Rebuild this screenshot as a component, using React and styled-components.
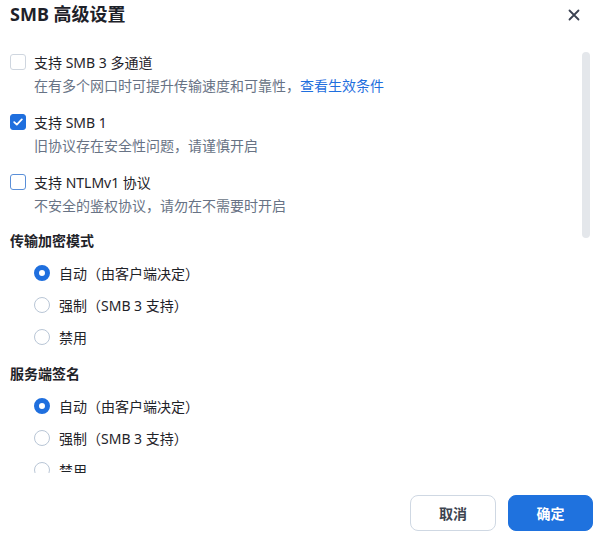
import { createGlobalStyle, styled } from "styled-components";

const GlobalStyle = createGlobalStyle`
  html, body {
    margin: 0;
    padding: 0;
    background: #fff;
  }
  body {
    font-family: "Noto Sans", "Noto Sans CJK SC", sans-serif;
    color: #1f2329;
  }
  * {
    box-sizing: border-box;
  }
`;

const Dialog = styled.div`
  position: relative;
  width: 599px;
  height: 541px;
  display: flex;
  flex-direction: column;
  background: #fff;
  overflow: hidden;
`;

const Header = styled.div`
  height: 44px;
  padding: 1px 10px 0;
  display: flex;
  align-items: flex-start;
  justify-content: space-between;
  h2 {
    margin: 0;
    font-size: 18px;
    line-height: 26px;
    font-weight: 700;
    color: #1d2129;
  }
`;

const CloseButton = styled.button`
  border: 0;
  background: none;
  padding: 0;
  margin: 3px 4px 0 0;
  width: 22px;
  height: 22px;
  display: flex;
  align-items: center;
  justify-content: center;
  cursor: pointer;
`;

const Body = styled.div`
  height: 429px;
  overflow: hidden;
  padding: 6px 20px 0 10px;
`;

const ScrollThumb = styled.div`
  position: absolute;
  right: 9px;
  top: 52px;
  width: 8px;
  height: 186px;
  border-radius: 4px;
  background: #e4e7eb;
`;

const Option = styled.div`
  margin-bottom: 12px;
`;

const Row = styled.label`
  display: flex;
  align-items: center;
  gap: ${(p) => p.$gap || 8}px;
  height: 24px;
  font-size: 14px;
  color: #1f2329;
`;

const Box = styled.span`
  width: 16px;
  height: 16px;
  border-radius: 3px;
  display: flex;
  align-items: center;
  justify-content: center;
  border: 1px solid ${(p) => (p.$checked ? "#1f6fde" : p.$focus ? "#5a8fd8" : "#cfd6df")};
  background: ${(p) => (p.$checked ? "#1f6fde" : "#fff")};
`;

const Desc = styled.div`
  padding-left: 24px;
  font-size: 14px;
  line-height: 24px;
  color: #687385;
  a {
    color: #1f6fde;
    text-decoration: none;
  }
`;

const SectionTitle = styled.div`
  font-size: 14px;
  font-weight: 700;
  line-height: 24px;
  color: #1f2329;
  margin: ${(p) => (p.$first ? "-1px" : "13px")} 0 8px;
`;

const RadioList = styled.div`
  display: flex;
  flex-direction: column;
  gap: 8px;
  padding-left: 24px;
`;

const Dot = styled.span`
  width: 16px;
  height: 16px;
  border-radius: 50%;
  flex-shrink: 0;
  border: ${(p) => (p.$checked ? "5px solid #1f6fde" : "1px solid #b9c6d6")};
  background: #fff;
`;

const Footer = styled.div`
  flex: 1;
  display: flex;
  justify-content: flex-end;
  align-items: flex-start;
  gap: 12px;
  padding: 22px 6px 0 0;
`;

const Button = styled.button`
  width: ${(p) => (p.$primary ? 85 : 86)}px;
  height: 36px;
  border-radius: 8px;
  font-family: inherit;
  font-size: 14px;
  font-weight: 700;
  cursor: pointer;
  border: 1px solid ${(p) => (p.$primary ? "#1f72de" : "#cfd8e3")};
  background: ${(p) => (p.$primary ? "#1f72de" : "#fff")};
  color: ${(p) => (p.$primary ? "#fff" : "#3d4450")};
`;

const checks = [
  {
    label: "支持 SMB 3 多通道",
    desc: "在有多个网口时可提升传输速度和可靠性，",
    link: "查看生效条件",
  },
  { label: "支持 SMB 1", desc: "旧协议存在安全性问题，请谨慎开启", checked: true },
  { label: "支持 NTLMv1 协议", desc: "不安全的鉴权协议，请勿在不需要时开启", focus: true },
];

const radioOptions = ["自动（由客户端决定）", "强制（SMB 3 支持）", "禁用"];

const CheckOption = ({ label, desc, link, checked, focus }) => (
  <Option>
    <Row>
      <Box $checked={checked} $focus={focus}>
        {checked && (
          <svg width="10" height="8" viewBox="0 0 10 8">
            <path d="M1.2 4.1 3.8 6.6 8.8 1.4" fill="none" stroke="#fff" strokeWidth="1.8" strokeLinecap="round" strokeLinejoin="round" />
          </svg>
        )}
      </Box>
      {label}
    </Row>
    <Desc>
      {desc}
      {link && <a href="#">{link}</a>}
    </Desc>
  </Option>
);

const RadioGroup = ({ title, first }) => (
  <>
    <SectionTitle $first={first}>{title}</SectionTitle>
    <RadioList>
      {radioOptions.map((o, i) => (
        <Row key={o} $gap={9}>
          <Dot $checked={i === 0} />
          {o}
        </Row>
      ))}
    </RadioList>
  </>
);

const App = () => {
  return (
    <>
      <GlobalStyle />
      <Dialog>
        <Header>
          <h2>SMB 高级设置</h2>
          <CloseButton aria-label="关闭">
            <svg width="12" height="12" viewBox="0 0 12 12">
              <path d="M1.5 1.5l9 9M10.5 1.5l-9 9" stroke="#3b4252" strokeWidth="1.8" strokeLinecap="round" />
            </svg>
          </CloseButton>
        </Header>
        <Body>
          {checks.map((c) => (
            <CheckOption key={c.label} {...c} />
          ))}
          <RadioGroup title="传输加密模式" first />
          <RadioGroup title="服务端签名" />
        </Body>
        <ScrollThumb />
        <Footer>
          <Button>取消</Button>
          <Button $primary>确定</Button>
        </Footer>
      </Dialog>
    </>
  );
};

export default App;
